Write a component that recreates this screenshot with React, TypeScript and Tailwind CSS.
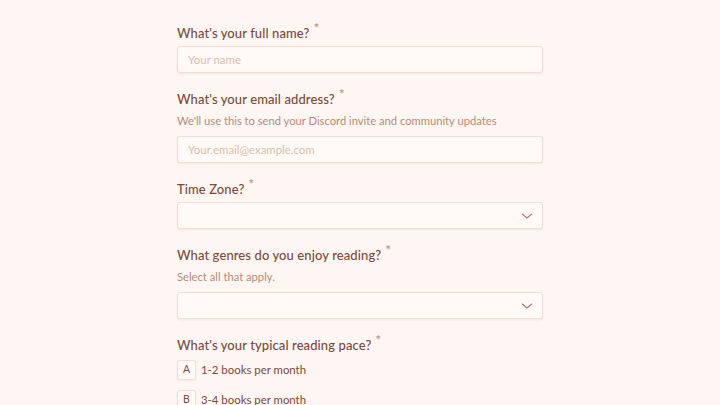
import React from "react";

const Label = ({ children }: { children: React.ReactNode }) => (
  <div className="h-[20px] text-[13px] leading-[20px] font-medium text-[#7b4a3c] mb-[3px] tracking-[0.1px] whitespace-nowrap">
    {children}
    <span className="relative top-[-5px] ml-[4px] text-[14px] leading-none text-[#b98f80]">*</span>
  </div>
);

const Desc = ({ children }: { children: React.ReactNode }) => (
  <div className="h-[18px] text-[11.2px] leading-[18px] text-[#b58c7c] mt-[1px] mb-[6px] whitespace-nowrap">{children}</div>
);

const Input = ({ placeholder }: { placeholder: string }) => (
  <div className="h-[27px] rounded-[3px] border border-[#f1ddd3] bg-[#fffaf7] shadow-[0_1px_2px_rgba(180,120,100,0.12)] px-[10px] flex items-center text-[11.4px] text-[#dcbcac]">
    {placeholder}
  </div>
);

const Select = () => (
  <div className="h-[27px] rounded-[3px] border border-[#f1ddd3] bg-[#fffaf7] shadow-[0_1px_2px_rgba(180,120,100,0.12)] pl-[10px] pr-[7px] flex items-center justify-end">
    <svg width="16" height="16" viewBox="0 0 24 24" fill="none" stroke="#a57c6c" strokeWidth="1.6" strokeLinecap="round" strokeLinejoin="round">
      <path d="M5 9l7 6 7-6" />
    </svg>
  </div>
);

const Option = ({ k, text }: { k: string; text: string }) => (
  <div className="flex items-center h-[20px]">
    <div className="w-[19px] h-[20px] rounded-[3px] border border-[#f1ddd3] bg-[#fffaf7] shadow-[0_1px_2px_rgba(180,120,100,0.12)] flex items-center justify-center text-[10.5px] text-[#7b4a3c]">
      {k}
    </div>
    <span className="ml-[5px] text-[11.4px] text-[#7b4a3c]">{text}</span>
  </div>
);

export default function App() {
  return (
    <div
      className="w-[720px] h-[405px] overflow-hidden bg-[#fdf6f2]"
      style={{ fontFamily: "Lato, 'Noto Sans', sans-serif" }}
    >
      <div className="w-[366px] ml-[177px] pt-[23px] flex flex-col gap-[16px]">
        <div>
          <Label>What's your full name?</Label>
          <Input placeholder="Your name" />
        </div>
        <div>
          <Label>What's your email address?</Label>
          <Desc>We'll use this to send your Discord invite and community updates</Desc>
          <Input placeholder="Your.email@example.com" />
        </div>
        <div>
          <Label>Time Zone?</Label>
          <Select />
        </div>
        <div>
          <Label>What genres do you enjoy reading?</Label>
          <Desc>Select all that apply.</Desc>
          <Select />
        </div>
        <div>
          <Label>What's your typical reading pace?</Label>
          <div className="mt-[5px] flex flex-col gap-[10px]">
            <Option k="A" text="1-2 books per month" />
            <Option k="B" text="3-4 books per month" />
          </div>
        </div>
      </div>
    </div>
  );
}
